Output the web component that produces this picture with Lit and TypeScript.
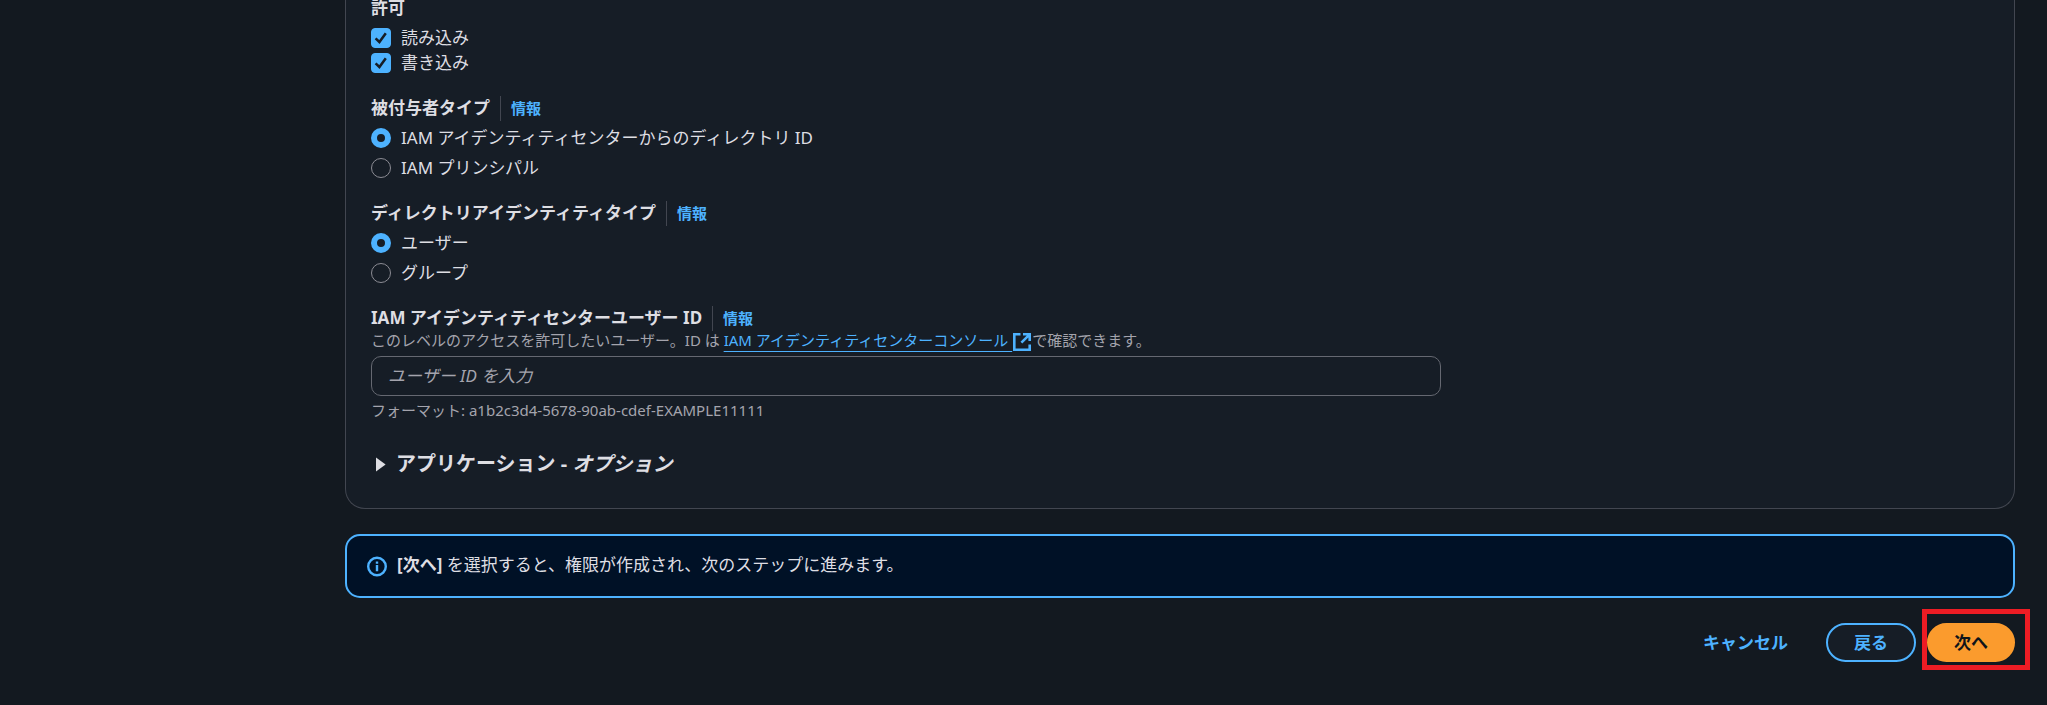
import { LitElement, html, css } from "lit";
import { customElement, property, state } from "lit/decorators.js";

@customElement("field-label")
class FieldLabel extends LitElement {
  static styles = css`
    :host {
      display: flex;
      align-items: stretch;
      height: 25px;
      line-height: 24px;
    }
    .text {
      font-size: 17px;
      font-weight: 700;
      color: #dedee3;
    }
    .info {
      margin-left: 10px;
      padding-left: 10px;
      border-left: 1px solid #424650;
      font-size: 15px;
      font-weight: 700;
      line-height: 25px;
      color: #4db2ff;
      text-decoration: none;
    }
  `;
  @property({ type: Boolean }) info = false;
  render() {
    return html`<span class="text"><slot></slot></span>${this.info
        ? html`<a class="info" href="#info">情報</a>`
        : ""}`;
  }
}

@customElement("choice-list")
class ChoiceList extends LitElement {
  static styles = css`
    .list {
      display: flex;
      flex-direction: column;
      gap: 10px;
    }
    .checkbox {
      gap: 5px;
    }
    .choice {
      display: flex;
      align-items: center;
      align-self: flex-start;
      gap: 10px;
      height: 20px;
      font-size: 17px;
      line-height: 20px;
      color: #dedee3;
    }
    .control {
      display: grid;
      width: 20px;
      height: 20px;
    }
    .control > * {
      grid-area: 1 / 1;
    }
    input {
      appearance: none;
      box-sizing: border-box;
      width: 20px;
      height: 20px;
      margin: 0;
      border: 1px solid #8c8c94;
      border-radius: 4px;
    }
    input[type="radio"] {
      border-radius: 50%;
    }
    input[type="checkbox"]:checked {
      border-color: #4db2ff;
      background: #4db2ff;
    }
    input[type="radio"]:checked {
      border: 6px solid #4db2ff;
    }
    svg {
      width: 20px;
      height: 20px;
      pointer-events: none;
    }
    .tick {
      fill: none;
      stroke: #161d26;
      stroke-width: 2.5;
    }
  `;
  @property() type: "checkbox" | "radio" = "radio";
  @property({ type: Array }) options: string[] = [];
  @property({ type: Array }) selected: string[] = [];

  render() {
    return html`<div class="list ${this.type}">
      ${this.options.map(
        (o) => html`<label class="choice">
          <span class="control">
            <input type=${this.type} name="choice" .checked=${this.selected.includes(o)}
              @change=${(e: Event) => this.pick(o, (e.target as HTMLInputElement).checked)} />
            ${this.type === "checkbox" && this.selected.includes(o)
              ? html`<svg viewBox="0 0 20 20" aria-hidden="true"><path class="tick" d="M4.6 10.4 8.4 14 14.8 5.2" /></svg>`
              : ""}
          </span>
          <span>${o}</span>
        </label>`
      )}
    </div>`;
  }

  private pick(option: string, on: boolean) {
    if (this.type === "radio") this.selected = [option];
    else this.selected = on ? [...this.selected, option] : this.selected.filter((s) => s !== option);
  }
}

@customElement("app-root")
class AppRoot extends LitElement {
  static styles = css`
    :host {
      --page: #131920;
      --surface: #161d26;
      --line: #424650;
      --control-line: #656871;
      --text: #dedee3;
      --muted: #a4a4ad;
      --accent: #4db2ff;
      --primary: #fb9b2d;
      display: block;
      box-sizing: border-box;
      min-height: 100vh;
      overflow: hidden;
      padding: 0 32px 0 345px;
      background: var(--page);
      color: var(--text);
      font-family: "Noto Sans", "Noto Sans CJK JP", sans-serif;
      font-size: 17px;
    }
    .card {
      display: flex;
      flex-direction: column;
      gap: 23px;
      margin-top: -4px;
      padding: 0 25px 32px;
      border: 1px solid var(--line);
      border-top: 0;
      border-radius: 0 0 20px 20px;
      background: var(--surface);
    }
    .group {
      display: flex;
      flex-direction: column;
      gap: 7px;
    }
    .field {
      display: flex;
      flex-direction: column;
    }
    .hint {
      padding-bottom: 2px;
      font-size: 15px;
      line-height: 18px;
      color: var(--muted);
    }
    .console {
      color: var(--accent);
      text-decoration: underline;
      text-underline-offset: 5px;
      text-decoration-thickness: 1px;
    }
    .external {
      width: 20px;
      height: 18px;
      margin: -2px 0;
      vertical-align: -3px;
      fill: none;
      stroke: var(--accent);
      stroke-width: 2.6;
    }
    .entry {
      box-sizing: border-box;
      width: calc((100% + 25px) * 2 / 3 - 25px);
      height: 40px;
      margin: 5px 0;
      padding: 0 16px 2px;
      border: 1px solid var(--control-line);
      border-radius: 10px;
      background: transparent;
      color: var(--text);
      font: inherit;
    }
    .entry::placeholder {
      color: var(--muted);
      font-style: italic;
      opacity: 1;
    }
    .expander {
      display: flex;
      align-items: center;
      align-self: flex-start;
      gap: 10px;
      margin-top: 7px;
      padding: 0 0 0 5px;
      border: 0;
      background: none;
      color: var(--text);
      font: inherit;
      font-size: 20px;
      font-weight: 700;
      line-height: 25px;
    }
    .caret {
      width: 10px;
      height: 16px;
      fill: var(--text);
    }
    .alert {
      display: flex;
      align-items: flex-start;
      gap: 10px;
      box-sizing: border-box;
      min-height: 64px;
      margin-top: 25px;
      padding: 18px 20px;
      border: 2px solid var(--accent);
      border-radius: 15px;
      background: #001126;
      line-height: 22px;
    }
    .alert svg {
      flex: none;
      width: 20px;
      height: 24px;
      fill: none;
      stroke: var(--accent);
      stroke-width: 2.4;
    }
    .actions {
      display: flex;
      justify-content: flex-end;
      gap: 11px;
      margin-top: 25px;
    }
    .button {
      box-sizing: border-box;
      height: 39px;
      padding: 0 25px 2px;
      border: 2px solid transparent;
      border-radius: 20px;
      background: transparent;
      color: var(--accent);
      font: inherit;
      font-weight: 700;
    }
    .outlined {
      padding: 0 26px 2px;
      border-color: var(--accent);
      background: var(--surface);
    }
    .filled {
      border-color: var(--primary);
      background: var(--primary);
      color: #0f141a;
    }
    .target {
      position: relative;
      display: flex;
    }
    .marker {
      position: absolute;
      inset: -14px -15px -8px -5px;
      border: 5px solid #ed1c24;
      pointer-events: none;
    }
  `;

  @state() private open = false;

  render() {
    return html`
      <section class="card">
        <div class="group">
          <field-label>許可</field-label>
          <choice-list type="checkbox" .options=${["読み込み", "書き込み"]} .selected=${["読み込み", "書き込み"]}></choice-list>
        </div>
        <div class="group">
          <field-label info>被付与者タイプ</field-label>
          <choice-list
            .options=${["IAM アイデンティティセンターからのディレクトリ ID", "IAM プリンシパル"]}
            .selected=${["IAM アイデンティティセンターからのディレクトリ ID"]}
          ></choice-list>
        </div>
        <div class="group">
          <field-label info>ディレクトリアイデンティティタイプ</field-label>
          <choice-list .options=${["ユーザー", "グループ"]} .selected=${["ユーザー"]}></choice-list>
        </div>
        <div class="field">
          <field-label info><label for="user-id">IAM アイデンティティセンターユーザー ID</label></field-label>
          <div class="hint" id="about">このレベルのアクセスを許可したいユーザー。ID は <a class="console" href="#console">IAM アイデンティティセンターコンソール&nbsp;</a><svg class="external" viewBox="0 0 20 18" aria-hidden="true"><path d="M8.5 1.3H2.3V16.7H17.7V11.5M11 1.3H17.7V8M17.2 1.8 9.4 9.6" /></svg>で確認できます。</div>
          <input class="entry" id="user-id" type="text" placeholder="ユーザー ID を入力" aria-describedby="about format" />
          <div class="hint" id="format">フォーマット: a1b2c3d4-5678-90ab-cdef-EXAMPLE11111</div>
        </div>
        <button class="expander" aria-expanded=${this.open} @click=${() => (this.open = !this.open)}>
          <svg class="caret" viewBox="0 0 10 16" aria-hidden="true"><path d="M0 1.5 9.6 8.5 0 15.5Z" /></svg>
          <span>アプリケーション - <em>オプション</em></span>
        </button>
      </section>
      <div class="alert" role="status">
        <svg viewBox="0 0 20 24" aria-hidden="true"><circle cx="10" cy="12.5" r="8.8" /><path d="M10 11V17.2M10 7.4V9.8" /></svg>
        <span><b>[次へ]</b> を選択すると、権限が作成され、次のステップに進みます。</span>
      </div>
      <div class="actions">
        <button class="button">キャンセル</button>
        <button class="button outlined">戻る</button>
        <div class="target"><button class="button filled">次へ</button><span class="marker"></span></div>
      </div>
    `;
  }
}
